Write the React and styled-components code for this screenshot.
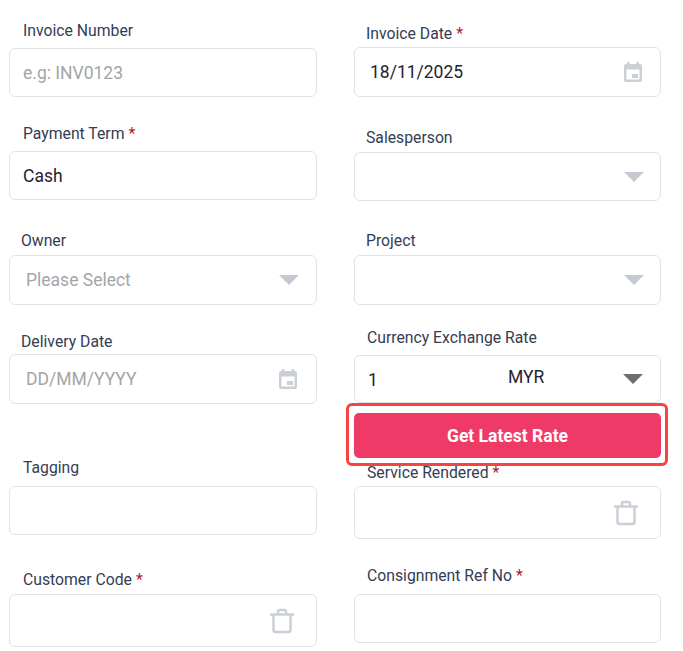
import React from "react"
import styled, { createGlobalStyle } from "styled-components"

const GlobalStyle = createGlobalStyle`
  body {
    margin: 0;
    background: #fff;
    font-family: Roboto, "Liberation Sans", sans-serif;
  }
`

const Form = styled.form`
  display: grid;
  grid-template-columns: 308px 307px;
  column-gap: 37px;
  width: 683px;
  height: 651px;
  padding-left: 9px;
  box-sizing: border-box;
  overflow: hidden;
`

const Column = styled.div`
  display: flex;
  flex-direction: column;
`

const Field = styled.div`
  display: flex;
  flex-direction: column;
  margin-top: ${(p) => p.$top}px;
`

const Label = styled.label`
  height: 20px;
  line-height: 21px;
  font-size: 15.75px;
  color: #333d54;
  padding-left: ${(p) => p.$indent || 14}px;
  margin-bottom: ${(p) => p.$gap}px;
`

const Required = styled.span`
  color: #b0182c;
  margin-left: 4px;
`

const Box = styled.div`
  display: flex;
  align-items: center;
  height: ${(p) => p.$height || 49}px;
  box-sizing: border-box;
  border: 1px solid #e1e3e6;
  border-radius: 6px;
  padding: 0 ${(p) => p.$right || 18}px 0 ${(p) => p.$left || 13}px;
  background: #fff;
`

const TextInput = styled.input`
  flex: 1;
  min-width: 0;
  border: 0;
  outline: 0;
  padding: 0 0 ${(p) => p.$lift || 0}px;
  background: transparent;
  font-family: inherit;
  font-size: 17.5px;
  color: #1f2430;

  &::placeholder {
    color: #a3a5a8;
    opacity: 1;
  }
`

const SelectText = styled.span`
  flex: 1;
  font-size: 17.5px;
  padding-bottom: 1px;
  color: ${(p) => (p.$muted ? "#a3a5a8" : "#1f2430")};
`

const RateValue = styled.span`
  width: 140px;
  font-size: 17.5px;
  color: #1f2430;
  padding-top: 2px;
`

const Currency = styled.span`
  flex: 1;
  font-size: 17.5px;
  color: #1f2430;
  padding-bottom: 4px;
`

const Caret = styled.span`
  width: 0;
  height: 0;
  border-left: 10px solid transparent;
  border-right: 10px solid transparent;
  border-top: 10px solid ${(p) => (p.$dark ? "#6e6e6e" : "#c5c9d2")};
`

const RateButton = styled.button`
  position: relative;
  height: 45px;
  margin-top: 10px;
  border: 0;
  border-radius: 5px;
  background: #ef3a67;
  color: #fff;
  font-family: inherit;
  font-size: 17.5px;
  font-weight: 700;

  &::after {
    content: "";
    position: absolute;
    top: -10px;
    right: -7px;
    bottom: -8px;
    left: -8px;
    border: 3px solid #f5433f;
    border-radius: 6px;
  }
`

const Icon = styled.svg`
  flex: none;
  fill: none;
  color: #cbd0d7;
`

const CalendarIcon = () => (
  <Icon width="18" height="20" viewBox="0 0 18 20">
    <path
      fill="currentColor"
      fillRule="evenodd"
      d="M3 0h2.500v2h7V0H15v2h1a2 2 0 0 1 2 2v14a2 2 0 0 1-2 2H2a2 2 0 0 1-2-2V4a2 2 0 0 1 2-2h1V0zM2.500 7.500v10h13v-10h-13zM8 12h6v4H8v-4z"
    />
  </Icon>
)

const TrashIcon = () => (
  <Icon width="26" height="26" viewBox="0 0 26 26" stroke="currentColor" strokeWidth="2.500">
    <path d="M1 6.500h24M9 6.500V3.500a1.500 1.500 0 0 1 1.500-1.500h5A1.500 1.500 0 0 1 17 3.500v3M4.500 6.500V22a2 2 0 0 0 2 2h13a2 2 0 0 0 2-2V6.500" />
  </Icon>
)

const App = () => {
  return (
    <>
      <GlobalStyle />
      <Form>
        <Column>
          <Field $top={20}>
            <Label $gap={8}>Invoice Number</Label>
            <Box>
              <TextInput placeholder="e.g: INV0123" />
            </Box>
          </Field>
          <Field $top={26}>
            <Label $gap={8}>
              Payment Term<Required>*</Required>
            </Label>
            <Box>
              <TextInput defaultValue="Cash" />
            </Box>
          </Field>
          <Field $top={30}>
            <Label $gap={5} $indent={12}>Owner</Label>
            <Box $height={50} $left={16} $right={17}>
              <SelectText $muted>Please Select</SelectText>
              <Caret />
            </Box>
          </Field>
          <Field $top={26}>
            <Label $gap={3} $indent={12}>Delivery Date</Label>
            <Box $height={50} $left={16} $right={19}>
              <TextInput placeholder="DD/MM/YYYY" />
              <CalendarIcon />
            </Box>
          </Field>
          <Field $top={53}>
            <Label $gap={9}>Tagging</Label>
            <Box />
          </Field>
          <Field $top={34}>
            <Label $gap={5}>
              Customer Code<Required>*</Required>
            </Label>
            <Box $height={53} $right={21}>
              <SelectText />
              <TrashIcon />
            </Box>
          </Field>
        </Column>
        <Column>
          <Field $top={23}>
            <Label $gap={4} $indent={12}>
              Invoice Date<Required>*</Required>
            </Label>
            <Box $height={50} $left={15} $right={18}>
              <TextInput defaultValue="18/11/2025" $lift={1} />
              <CalendarIcon />
            </Box>
          </Field>
          <Field $top={30}>
            <Label $gap={5} $indent={12}>Salesperson</Label>
            <Box $right={16}>
              <SelectText />
              <Caret />
            </Box>
          </Field>
          <Field $top={29}>
            <Label $gap={5} $indent={12}>Project</Label>
            <Box $height={50} $right={16}>
              <SelectText />
              <Caret />
            </Box>
          </Field>
          <Field $top={22}>
            <Label $gap={8} $indent={13}>Currency Exchange Rate</Label>
            <Box $height={48} $right={17}>
              <RateValue>1</RateValue>
              <Currency>MYR</Currency>
              <Caret $dark />
            </Box>
          </Field>
          <RateButton type="button">Get Latest Rate</RateButton>
          <Field $top={4}>
            <Label $gap={4} $indent={13}>
              Service Rendered<Required>*</Required>
            </Label>
            <Box $height={53} $right={21}>
              <SelectText />
              <TrashIcon />
            </Box>
          </Field>
          <Field $top={26}>
            <Label $gap={9} $indent={13}>
              Consignment Ref No<Required>*</Required>
            </Label>
            <Box />
          </Field>
        </Column>
      </Form>
    </>
  )
}

export default App
